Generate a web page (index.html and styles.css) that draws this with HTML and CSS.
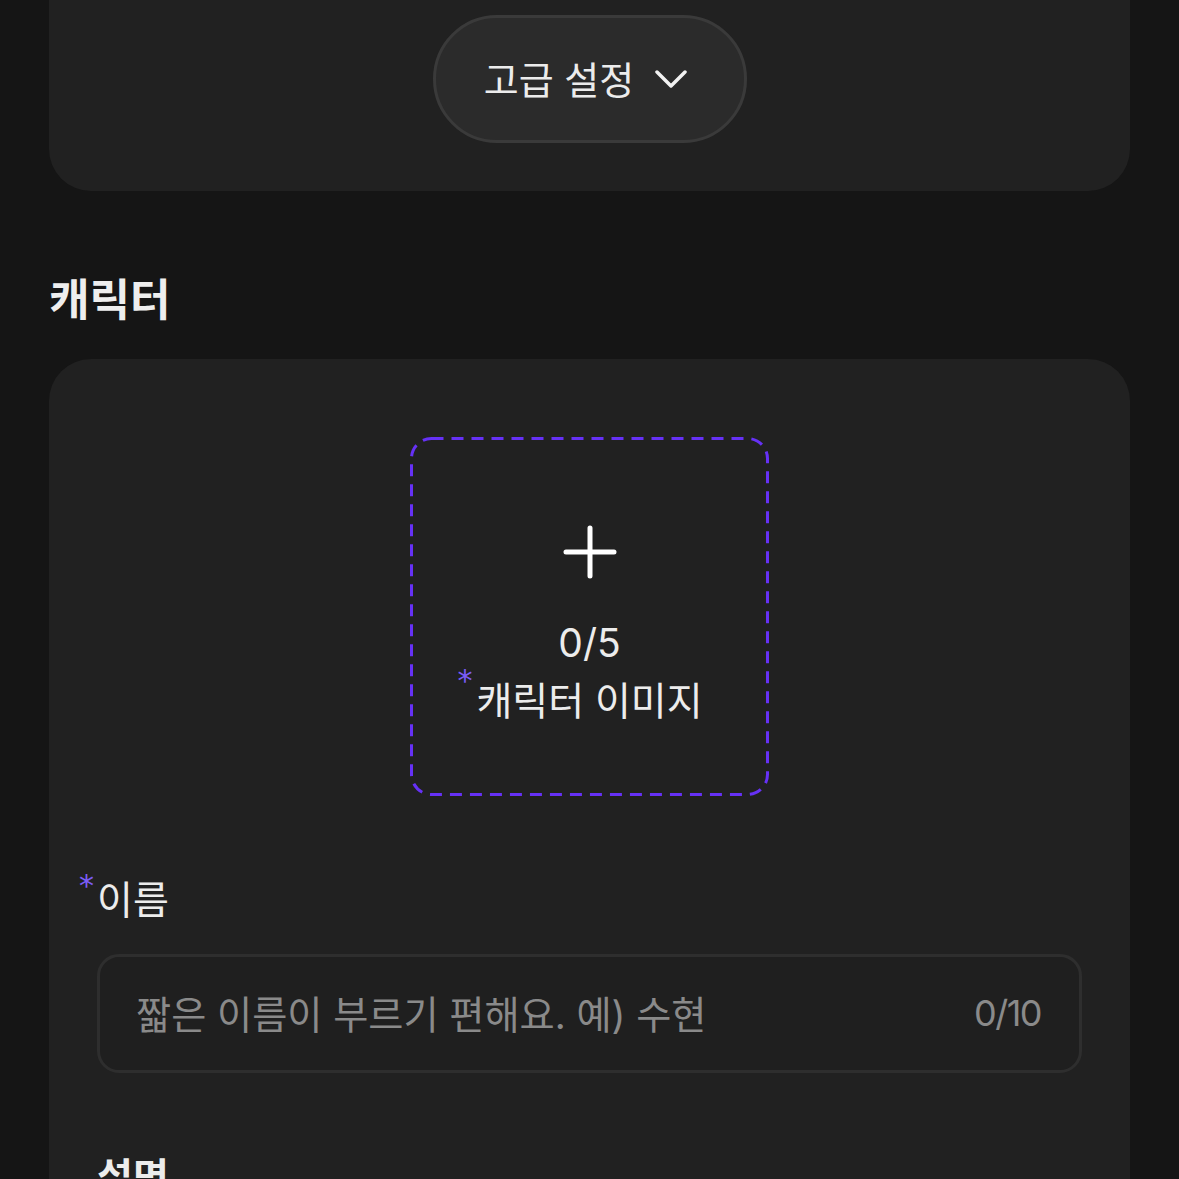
FILE: index.html
```html
<!DOCTYPE html>
<html lang="ko">
<head>
<meta charset="utf-8">
<link rel="stylesheet" href="styles.css">
</head>
<body>
<div class="page">
  <section class="card card-top">
    <button class="adv-btn">
      <span>고급 설정</span>
      <svg class="chev" width="32" height="20" viewBox="0 0 32 20"><polyline points="2,3 16,17 30,3" fill="none" stroke="#f2f2f2" stroke-width="3.5" stroke-linecap="round" stroke-linejoin="round"/></svg>
    </button>
  </section>

  <h2 class="section-title">캐릭터</h2>

  <section class="card card-main">
    <div class="upload">
      <svg class="dash" width="359" height="359" viewBox="0 0 359 359"><rect x="1.5" y="1.5" width="356" height="356" rx="20" ry="20" fill="none" stroke="#6631f6" stroke-width="3" stroke-dasharray="12 8"/></svg>
      <svg class="plus" width="54" height="54" viewBox="0 0 54 54"><path d="M27 3 V51 M3 27 H51" stroke="#ffffff" stroke-width="5" stroke-linecap="round"/></svg>
      <div class="count">0/5</div>
      <div class="up-label"><span class="req">*</span>캐릭터 이미지</div>
    </div>

    <div class="field">
      <label class="field-label"><span class="req">*</span>이름</label>
      <div class="input">
        <span class="placeholder">짧은 이름이 부르기 편해요. 예) 수현</span>
        <span class="counter">0/10</span>
      </div>
    </div>

    <div class="field field-desc">
      <label class="field-label bold">설명</label>
    </div>
  </section>
</div>
</body>
</html>
```
FILE: styles.css
```css
html, body {
  margin: 0;
  padding: 0;
  background: #151515;
  font-family: Inter, "Noto Sans CJK KR", sans-serif;
  color: #ececec;
}
.page {
  padding: 0 49px;
}
.card {
  background: #212121;
  border-radius: 42px;
}
.card-top {
  border-radius: 0 0 42px 42px;
  padding: 15px 0 48px;
  display: flex;
  justify-content: center;
}
.adv-btn {
  width: 314px;
  height: 128px;
  box-sizing: border-box;
  border: 3px solid #3a3a3a;
  background: #2b2b2b;
  border-radius: 64px;
  display: flex;
  align-items: center;
  justify-content: center;
  gap: 21px;
  font-family: inherit;
  font-size: 38px;
  color: #ececec;
  padding: 0 8px 4px 0;
}
.chev {
  margin-top: 4px;
}
.section-title {
  margin: 0;
  padding: 80px 0 30px;
  font-size: 44px;
  font-weight: 700;
  line-height: 58px;
  color: #eeeeee;
}
.card-main {
  padding: 78px 48px 60px;
}
.upload {
  position: relative;
  width: 359px;
  height: 359px;
  margin: 0 auto;
  display: flex;
  flex-direction: column;
  align-items: center;
  box-sizing: border-box;
  padding-top: 88px;
}
.dash {
  position: absolute;
  left: 0;
  top: 0;
}
.plus {
  display: block;
}
.count {
  margin-top: 40px;
  font-size: 39px;
  line-height: 48px;
  color: #ececec;
}
.up-label {
  position: relative;
  font-size: 39px;
  line-height: 56px;
  color: #ececec;
  margin-top: 6px;
}
.req {
  position: absolute;
  left: -19px;
  top: -20px;
  color: #7b5cf7;
  font-size: 30px;
  font-family: "DejaVu Sans", sans-serif;
}
.field {
  margin-top: 76px;
}
.field-label {
  position: relative;
  display: block;
  font-size: 39px;
  line-height: 56px;
  color: #ececec;
}
.field-label .req {
  left: -18px;
  top: -14px;
}
.field-label.bold {
  font-weight: 600;
}
.field-desc {
  margin-top: 76px;
}
.input {
  margin-top: 26px;
  height: 119px;
  box-sizing: border-box;
  border: 3px solid #2e2e2e;
  border-radius: 22px;
  background: #1f1f1f;
  display: flex;
  align-items: center;
  justify-content: space-between;
  padding: 0 38px 0 36px;
  font-size: 38.2px;
  color: #8a8a8a;
}
.placeholder, .counter {
  padding-bottom: 2px;
}
.counter {
  font-size: 36px;
  letter-spacing: -1.5px;
}
```
